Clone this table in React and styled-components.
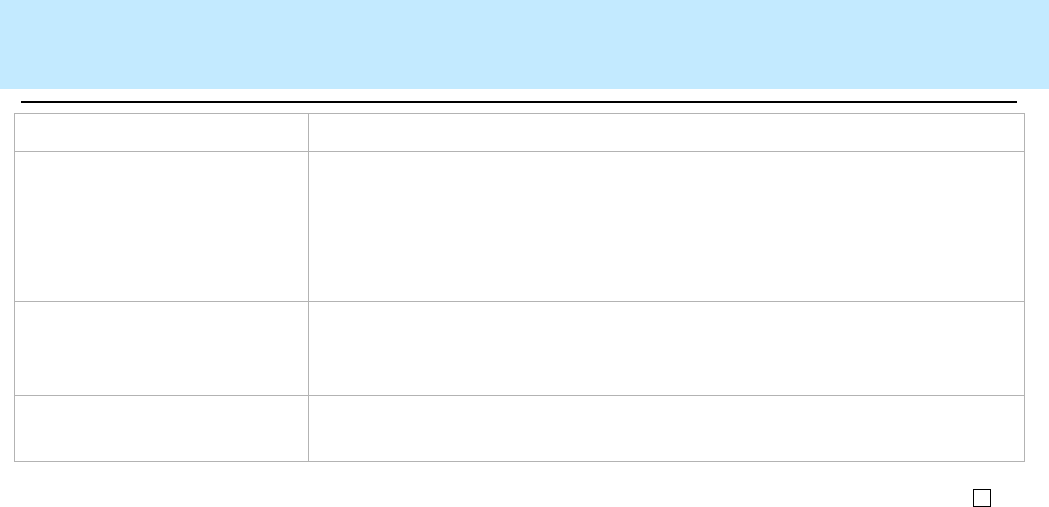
import React from 'react'
import styled, { createGlobalStyle } from 'styled-components'

const GlobalStyle = createGlobalStyle`
  html, body {
    margin: 0;
    padding: 0;
    background: #ffffff;
    font-family: "Liberation Sans", Arial, sans-serif;
  }
  * {
    box-sizing: border-box;
  }
`

const Page = styled.div`
  display: flex;
  flex-direction: column;
  width: 1049px;
  height: 507px;
  overflow: hidden;
`

const Banner = styled.header`
  height: 89px;
  width: 100%;
  background: #c3eaff;
`

const Rule = styled.div`
  margin: 12px 0 0 21px;
  width: 996px;
  height: 2px;
  background: #000000;
`

const Grid = styled.div`
  display: grid;
  grid-template-columns: 294px 716px;
  margin: 10px 0 0 14px;
  width: 1011px;
  border-top: 1px solid #b3b3b3;
  border-left: 1px solid #b3b3b3;
`

const Cell = styled.div`
  height: ${({ h }) => h}px;
  border-right: 1px solid #b3b3b3;
  border-bottom: 1px solid #b3b3b3;
`

const Footer = styled.div`
  display: flex;
  justify-content: flex-end;
  margin-top: 27px;
  padding-right: 58px;
`

const Checkbox = styled.span`
  display: block;
  width: 18px;
  height: 18px;
  border: 1px solid #000000;
  background: #ffffff;
`

const rows = [38, 150, 94, 66]

const App = () => (
  <Page>
    <GlobalStyle />
    <Banner />
    <Rule />
    <Grid>
      {rows.map((h, i) => (
        <React.Fragment key={i}>
          <Cell h={h} />
          <Cell h={h} />
        </React.Fragment>
      ))}
    </Grid>
    <Footer>
      <Checkbox />
    </Footer>
  </Page>
)

export default App
